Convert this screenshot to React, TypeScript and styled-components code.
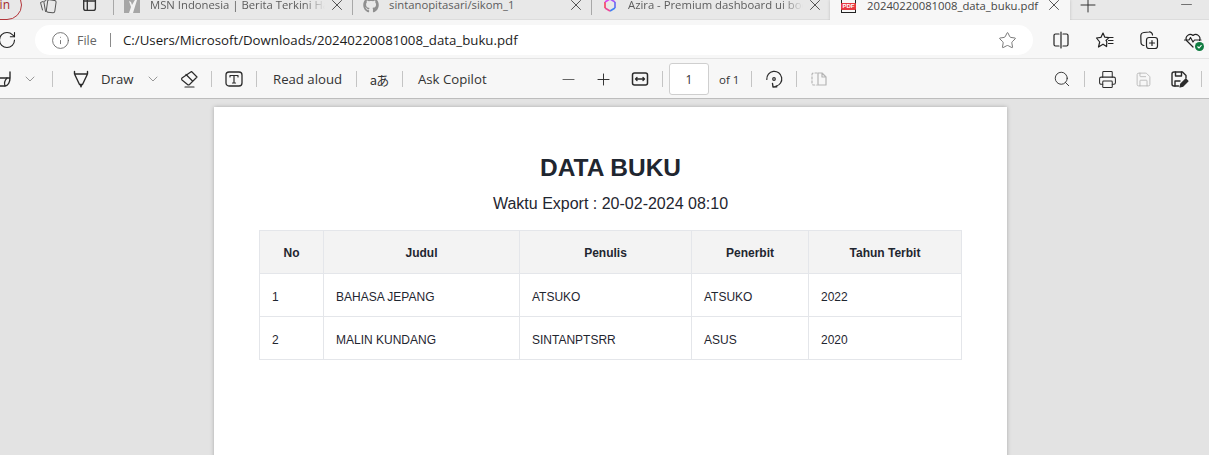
import { FC, ReactNode } from "react";
import styled, { createGlobalStyle } from "styled-components";
import {
  ChevronDown,
  Info,
  Minus,
  Plus,
  Printer,
  RotateCw,
  Save,
  Search,
  Star,
  X,
} from "lucide-react";
import { FaGithub } from "react-icons/fa";

const books = [
  { no: 1, judul: "BAHASA JEPANG", penulis: "ATSUKO", penerbit: "ATSUKO", tahun: 2022 },
  { no: 2, judul: "MALIN KUNDANG", penulis: "SINTANPTSRR", penerbit: "ASUS", tahun: 2020 },
];

const GlobalStyle = createGlobalStyle`
  html, body {
    margin: 0;
    height: 455px;
    overflow: hidden;
    background: #e3e3e3;
  }
  * { box-sizing: border-box; }
  svg { flex: none; }
`;

const Icon: FC<{ size?: number; children: ReactNode }> = ({ size = 20, children }) => (
  <svg width={size} height={size} viewBox="0 0 20 20" fill="none" stroke="currentColor" strokeWidth="1.2" strokeLinecap="round" strokeLinejoin="round">
    {children}
  </svg>
);

const Chevron = () => <ChevronDown size={16} strokeWidth={1} color="#666" />;
const CloseX = () => <X size={18} strokeWidth={1.1} />;

const App: FC = () => {
  return (
    <>
      <GlobalStyle />
      <Window>
        <TabStrip>
          <ProfilePill>in</ProfilePill>
          <StripIcon $ml={14} $w={24} $soft>
            <Icon>
              <path d="M5 6.500 2.500 7.500 4.500 15M8 5.500 5.800 6.500 7.500 16.500" strokeWidth="1" />
              <rect x="9" y="5" width="8.500" height="12.500" rx="1.800" transform="rotate(8 13 11)" strokeWidth="1" />
            </Icon>
          </StripIcon>
          <StripIcon $ml={18} $w={24}>
            <Icon size={18}>
              <rect x="3" y="2" width="13" height="14" rx="2.500" strokeWidth="1.500" />
              <path d="M7 2v14M3 5.500h13" strokeWidth="1.500" />
            </Icon>
          </StripIcon>
          <TabDivider $ml={11} />
          <Tab>
            <FavSlot>
              <svg width="16" height="16" viewBox="0 0 16 16">
                <rect width="16" height="16" fill="#a6a6a6" />
                <path d="M11.500 2 13 3 9 16H5l2-6-2-6 2 1 1 3Z" fill="#f2f2f2" />
              </svg>
            </FavSlot>
            <TabTitle $fade>MSN Indonesia | Berita Terkini Hari Ini</TabTitle>
            <TabClose><CloseX /></TabClose>
          </Tab>
          <TabDivider />
          <Tab>
            <GithubMark><FaGithub size={16} /></GithubMark>
            <TabTitle>sintanopitasari/sikom_1</TabTitle>
            <TabClose><CloseX /></TabClose>
          </Tab>
          <TabDivider />
          <Tab>
            <FavSlot>
              <svg width="16" height="16" viewBox="0 0 16 16" fill="none" strokeWidth="1.600">
                <path d="M8 2 13 5" stroke="#a855f7" />
                <path d="M13 5v6" stroke="#6366f1" />
                <path d="M13 11 8 14" stroke="#3b82f6" />
                <path d="M8 14 3 11" stroke="#ec4899" />
                <path d="M3 11V5" stroke="#f43f5e" />
                <path d="M3 5 8 2" stroke="#d946ef" />
              </svg>
            </FavSlot>
            <TabTitle $fade>Azira - Premium dashboard ui bootstrap</TabTitle>
            <TabClose><CloseX /></TabClose>
          </Tab>
          <ActiveTab>
            <PdfIcon><PdfBadge>PDF</PdfBadge></PdfIcon>
            <ActiveTitle>20240220081008_data_buku.pdf</ActiveTitle>
            <TabClose $active><CloseX /></TabClose>
          </ActiveTab>
          <StripIcon $ml={6} $w={24}>
            <Plus size={24} strokeWidth={1} />
          </StripIcon>
          <StripIcon $ml={74} $w={24}>
            <Minus size={17} strokeWidth={1.300} color="#666" />
          </StripIcon>
        </TabStrip>

        <AddressRow>
          <ReloadSlot><RotateCw size={20} strokeWidth={1.300} /></ReloadSlot>
          <AddressPill>
            <Info size={19} strokeWidth={1.100} color="#666" />
            <FileLabel>File</FileLabel>
            <AddressDivider />
            <Url>C:/Users/Microsoft/Downloads/20240220081008_data_buku.pdf</Url>
            <FavStar><Star size={19} strokeWidth={1.100} /></FavStar>
          </AddressPill>
          <BrowserActions>
            <ActionSlot>
              <Icon>
                <path d="M10 2v16M8 4H4.500A1.500 1.500 0 0 0 3 5.500v9A1.500 1.500 0 0 0 4.500 16H8M12 4h3.500A1.500 1.500 0 0 1 17 5.500v9a1.500 1.500 0 0 1-1.500 1.500H12" />
              </Icon>
            </ActionSlot>
            <ActionSlot>
              <Icon>
                <path d="M8 3 9.800 7.200l4.200.4-3 2.800.8 1.200-.2 5L8 14.200 3.500 17l1.200-5L1.500 8l4.400-.6Z" />
                <path d="M13 7.500h5M13.500 10.500H18M13.500 13.500H18" />
              </Icon>
            </ActionSlot>
            <ActionSlot>
              <Icon>
                <rect x="7.500" y="7.500" width="11" height="11" rx="2.500" />
                <path d="M13 10.500v5M10.500 13h5M5 15.500A3 3 0 0 1 2 12.500L1.800 6A3.500 3.500 0 0 1 5 2.500L10 2a3 3 0 0 1 3.500 3" />
              </Icon>
            </ActionSlot>
            <ActionSlot>
              <Icon>
                <path d="M10 17 3.500 10.500A4.200 4.200 0 0 1 10 5.500a4.200 4.200 0 0 1 6.500 5" />
                <path d="M1.500 10H6l1.500-2.500L10 12l1.500-2H18" />
              </Icon>
              <HealthDot>
                <svg width="9" height="9" viewBox="0 0 9 9" fill="none" stroke="#fff" strokeWidth="1.100">
                  <path d="M2.500 4.500 4 6l2.500-2.800" />
                </svg>
              </HealthDot>
            </ActionSlot>
          </BrowserActions>
        </AddressRow>

        <PdfToolbar>
          <ToolSlot $w={30} $ml={-12}>
            <Icon>
              <path d="M17 3v6H0M17 9c0 4-2 8-5 8H0" strokeWidth="1.400" />
              <path d="M12 17c-1-3 0-6 2-8" strokeWidth="1.200" />
            </Icon>
          </ToolSlot>
          <ToolSlot $w={24}><Chevron /></ToolSlot>
          <ToolDivider $ml={10} />
          <ToolSlot $w={24} $ml={16}>
            <Icon>
              <path d="M3.500 2.500v2.500h13V2.500M3.500 5 8.500 15.500h3L16.500 5" strokeWidth="1.400" />
              <path d="M9.200 15.500h1.600l-.8 2.500Z" fill="currentColor" />
            </Icon>
          </ToolSlot>
          <ToolLabel $w={32} $ml={8}>Draw</ToolLabel>
          <ToolSlot $w={24} $ml={8}><Chevron /></ToolSlot>
          <ToolSlot $w={24} $ml={12}>
            <Icon>
              <path d="M12.500 2.500 18 8l-7.500 7.500a1.500 1.500 0 0 1-2 0L3 11a1.500 1.500 0 0 1 0-2Z" />
              <path d="M7 5.500 13.500 12M6 18h9" />
            </Icon>
          </ToolSlot>
          <ToolDivider $ml={10} />
          <ToolSlot $w={24} $ml={10}>
            <Icon>
              <rect x="2" y="3" width="16" height="14" rx="3" strokeWidth="1.300" />
              <path d="M6 8V6.500h8V8M10 6.500v7.500M8.500 14h3" />
            </Icon>
          </ToolSlot>
          <ToolDivider $ml={10} />
          <ToolLabel $w={69} $ml={16}>Read aloud</ToolLabel>
          <ToolDivider $ml={14} />
          <ToolSlot $w={24} $ml={10}><Translate>aあ</Translate></ToolSlot>
          <ToolDivider $ml={11} />
          <ToolLabel $w={71} $ml={15}>Ask Copilot</ToolLabel>
          <ToolSlot $w={24} $ml={67}><Minus size={19} strokeWidth={1.300} color="#666" /></ToolSlot>
          <ToolSlot $w={24} $ml={11}><Plus size={19} strokeWidth={1.200} /></ToolSlot>
          <ToolSlot $w={24} $ml={13}>
            <Icon>
              <rect x="2.500" y="4" width="15" height="12" rx="2" strokeWidth="1.500" />
              <path d="M5.500 10h9M7 8.500 5.500 10 7 11.500M13 8.500l1.500 1.500-1.500 1.500" strokeWidth="1.300" />
            </Icon>
          </ToolSlot>
          <ToolDivider $ml={10} />
          <PageInput $ml={6}>1</PageInput>
          <ToolLabel $w={20} $ml={10} $small>of 1</ToolLabel>
          <ToolDivider $ml={12} />
          <ToolSlot $w={24} $ml={10}>
            <Icon>
              <path d="M2.800 10.500A7.500 7.500 0 1 1 12 17.200" />
              <path d="M8.500 14.500 9 18l3.800-.3" strokeWidth="1.400" />
              <circle cx="10" cy="10" r="1.300" />
            </Icon>
          </ToolSlot>
          <ToolDivider $ml={10} />
          <ToolSlot $w={24} $ml={10} $muted>
            <Icon>
              <path d="M8 4H4.500A1.500 1.500 0 0 0 3 5.500v9A1.500 1.500 0 0 0 4.500 16H8" strokeDasharray="2 2" />
              <path d="M9 4h4l4 4v8H9ZM13 4v4h4" />
            </Icon>
          </ToolSlot>
          <RightTools>
            <ToolSlot $w={24}><Search size={18} strokeWidth={1.200} /></ToolSlot>
            <ToolDivider $ml={10} />
            <ToolSlot $w={24} $ml={10}><Printer size={19} strokeWidth={1.300} /></ToolSlot>
            <ToolSlot $w={24} $ml={12} $muted><Save size={17} strokeWidth={1.200} /></ToolSlot>
            <ToolSlot $w={24} $ml={12}>
              <Icon>
                <path d="M9.500 17H5a2 2 0 0 1-2-2V5a2 2 0 0 1 2-2h8.500L17 6.500V9" strokeWidth="1.400" />
                <path d="M6.500 3v4h6V3M6 17v-5h5" strokeWidth="1.400" />
                <path d="M11 18l.8-3 5-5 2.200 2.200-5 5Z" fill="currentColor" />
              </Icon>
            </ToolSlot>
            <ToolDivider $ml={10} />
          </RightTools>
        </PdfToolbar>

        <Viewer>
          <Sheet>
            <Heading>DATA BUKU</Heading>
            <ExportTime>Waktu Export : 20-02-2024 08:10</ExportTime>
            <BookTable>
              <colgroup>
                <col width={64} />
                <col width={196} />
                <col width={172} />
                <col width={117} />
                <col width={153} />
              </colgroup>
              <thead>
                <tr>
                  <Th>No</Th>
                  <Th>Judul</Th>
                  <Th>Penulis</Th>
                  <Th>Penerbit</Th>
                  <Th>Tahun Terbit</Th>
                </tr>
              </thead>
              <tbody>
                {books.map((book) => (
                  <tr key={book.no}>
                    <Td>{book.no}</Td>
                    <Td>{book.judul}</Td>
                    <Td>{book.penulis}</Td>
                    <Td>{book.penerbit}</Td>
                    <Td>{book.tahun}</Td>
                  </tr>
                ))}
              </tbody>
            </BookTable>
          </Sheet>
        </Viewer>
      </Window>
    </>
  );
};

const Window = styled.div`
  width: 1209px;
  height: 455px;
  overflow: hidden;
  display: flex;
  flex-direction: column;
  font-family: "Open Sans", "Noto Sans", sans-serif;
`;

const TabStrip = styled.div`
  height: 20px;
  flex: none;
  display: flex;
  align-items: center;
  padding-bottom: 10px;
  background: #e8e8e8;
  border-bottom: 1px solid #dcdcdc;
`;

const ProfilePill = styled.div`
  flex: none;
  width: 44px;
  height: 30px;
  margin-left: -22px;
  border: 1px solid #b3353a;
  border-radius: 15px;
  display: flex;
  align-items: center;
  justify-content: flex-end;
  padding: 0 11px 0 0;
  font-size: 12px;
  color: #a4262c;
`;

const StripIcon = styled.div<{ $ml?: number; $w: number; $soft?: boolean }>`
  flex: none;
  width: ${(p) => p.$w}px;
  margin-left: ${(p) => p.$ml ?? 0}px;
  display: flex;
  align-items: center;
  justify-content: center;
  color: ${(p) => (p.$soft ? "#555" : "#333")};
`;

const TabDivider = styled.div<{ $ml?: number }>`
  flex: none;
  width: 1px;
  height: 20px;
  margin-left: ${(p) => p.$ml ?? 0}px;
  background: #a8a8a8;
`;

const Tab = styled.div`
  flex: none;
  width: 238px;
  display: flex;
  align-items: center;
  padding-left: 10px;
  font-size: 11.3px;
`;

const ActiveTab = styled.div`
  flex: none;
  position: relative;
  width: 240px;
  height: 20px;
  align-self: flex-start;
  padding: 0 0 10px 11px;
  display: flex;
  align-items: center;
  background: #f7f7f7;
  box-shadow: 0 0 3px rgba(0, 0, 0, 0.18);
  clip-path: inset(0 -4px 0 -4px);
  font-size: 11.3px;
`;

const TabTitle = styled.div<{ $fade?: boolean }>`
  flex: none;
  width: 175px;
  margin-left: 10px;
  white-space: nowrap;
  overflow: hidden;
  color: #5c5c5c;
  ${(p) =>
    p.$fade &&
    "mask-image: linear-gradient(to right, #000 88%, transparent 100%);"}
`;

const ActiveTitle = styled.div`
  flex: none;
  width: 172px;
  margin-left: 11px;
  white-space: nowrap;
  overflow: hidden;
  color: #454545;
`;

const TabClose = styled.div<{ $active?: boolean }>`
  flex: none;
  width: 14px;
  height: 14px;
  margin-left: ${(p) => (p.$active ? 8 : 5)}px;
  display: flex;
  align-items: center;
  justify-content: center;
  color: #333;
`;

const FavSlot = styled.div`
  flex: none;
  width: 16px;
  height: 16px;
  display: flex;
`;

const GithubMark = styled(FavSlot)`
  color: #8f8f8f;
`;

const PdfIcon = styled.div`
  flex: none;
  position: relative;
  width: 15px;
  height: 16px;
  border: 1px solid #222;
  border-top: none;
`;

const PdfBadge = styled.span`
  position: absolute;
  left: -1px;
  right: -1px;
  top: 6px;
  height: 7px;
  border-radius: 1px;
  background: #e8393f;
  color: #fff;
  font: bold 6px/7px "Liberation Sans", sans-serif;
  text-align: center;
`;

const AddressRow = styled.div`
  height: 39px;
  flex: none;
  display: flex;
  align-items: center;
  background: #f7f7f7;
  border-bottom: 1px solid #e3e3e3;
  padding-top: 2px;
`;

const ReloadSlot = styled.div`
  flex: none;
  width: 35px;
  margin-left: -10px;
  padding-left: 7px;
  margin-right: 10px;
  display: flex;
  color: #222;
`;

const AddressPill = styled.div`
  flex: none;
  width: 998px;
  height: 30px;
  border-radius: 15px;
  background: #fff;
  display: flex;
  align-items: center;
  padding: 0 16px;
`;

const FileLabel = styled.span`
  flex: none;
  width: 21px;
  margin-left: 7px;
  font-size: 12.5px;
  color: #666;
`;

const AddressDivider = styled.div`
  width: 1px;
  height: 14px;
  margin-left: 12px;
  background: #8a8a8a;
`;

const Url = styled.span`
  margin-left: 12px;
  font-size: 13.25px;
  color: #1c1c1c;
`;

const FavStar = styled.div`
  margin-left: auto;
  display: flex;
  color: #666;
`;

const BrowserActions = styled.div`
  flex: none;
  display: flex;
  margin-left: 18px;
  gap: 24px;
`;

const ActionSlot = styled.div`
  position: relative;
  width: 20px;
  height: 20px;
  color: #222;
`;

const HealthDot = styled.span`
  position: absolute;
  right: -1px;
  bottom: -1px;
  width: 9px;
  height: 9px;
  display: flex;
  border-radius: 50%;
  background: #107c41;
`;

const PdfToolbar = styled.div`
  height: 40px;
  flex: none;
  display: flex;
  align-items: center;
  padding-top: 1px;
  background: #f7f7f7;
  border-bottom: 1px solid #bdbdbd;
  color: #333;
`;

const ToolSlot = styled.div<{ $w: number; $ml?: number; $muted?: boolean }>`
  flex: none;
  width: ${(p) => p.$w}px;
  margin-left: ${(p) => p.$ml ?? 0}px;
  height: 24px;
  display: flex;
  align-items: center;
  justify-content: center;
  color: ${(p) => (p.$muted ? "#b5b5b5" : "#2b2b2b")};
`;

const ToolDivider = styled.div<{ $ml?: number }>`
  flex: none;
  width: 1px;
  height: 16px;
  margin-left: ${(p) => p.$ml ?? 0}px;
  background: #c4c4c4;
`;

const ToolLabel = styled.span<{ $w: number; $ml?: number; $small?: boolean }>`
  flex: none;
  width: ${(p) => p.$w}px;
  margin-left: ${(p) => p.$ml ?? 0}px;
  font-size: ${(p) => (p.$small ? 11.5 : 13.2)}px;
  white-space: nowrap;
  color: #333;
`;

const Translate = styled.span`
  font-family: "Noto Sans CJK JP", sans-serif;
  font-size: 13px;
  letter-spacing: -1px;
  color: #333;
`;

const PageInput = styled.div<{ $ml?: number }>`
  flex: none;
  width: 40px;
  height: 32px;
  margin-left: ${(p) => p.$ml ?? 0}px;
  background: #fff;
  border: 1px solid #cfcfcf;
  border-radius: 3px;
  display: flex;
  align-items: center;
  justify-content: center;
  font-size: 12px;
`;

const RightTools = styled.div`
  margin-left: auto;
  margin-right: 7px;
  display: flex;
  align-items: center;
`;

const Viewer = styled.div`
  flex: 1;
  min-height: 0;
  background: #e3e3e3;
  padding-top: 8px;
`;

const Sheet = styled.div`
  width: 793px;
  height: 500px;
  margin-left: 214px;
  padding: 46px 45px 0;
  background: #fff;
  box-shadow: 0 0 4px rgba(0, 0, 0, 0.25);
  font-family: "Liberation Sans", Arial, sans-serif;
  color: #1f2630;
`;

const Heading = styled.div`
  font-size: 24.5px;
  line-height: 30px;
  font-weight: 700;
  text-align: center;
`;

const ExportTime = styled.div`
  margin-top: 12px;
  font-size: 16px;
  line-height: 18px;
  text-align: center;
`;

const BookTable = styled.table`
  width: 702px;
  margin-top: 17px;
  border-collapse: collapse;
  table-layout: fixed;
  font-size: 12px;
`;

const Th = styled.th`
  height: 43px;
  padding: 2px 12px 0;
  background: #f3f3f3;
  border: 1px solid #e4e6ea;
  font-weight: 700;
  text-align: center;
`;

const Td = styled.td`
  height: 43px;
  padding: 4px 12px 0;
  border: 1px solid #e4e6ea;
`;

export default App;
